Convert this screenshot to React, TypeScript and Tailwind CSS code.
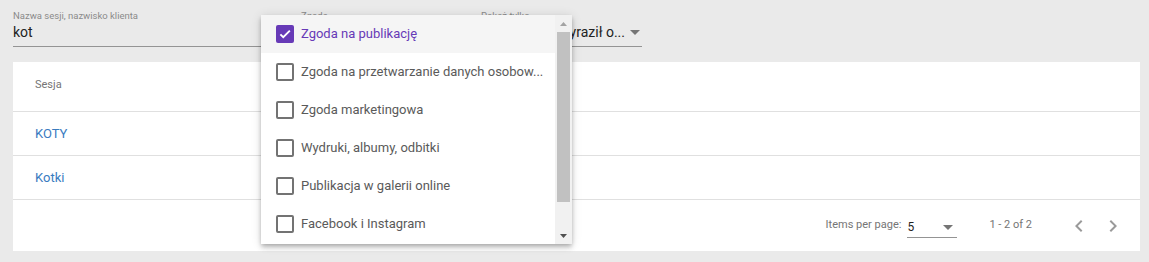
import React from 'react';

const options = [
  { label: 'Zgoda na publikację', checked: true },
  { label: 'Zgoda na przetwarzanie danych osobow...', checked: false },
  { label: 'Zgoda marketingowa', checked: false },
  { label: 'Wydruki, albumy, odbitki', checked: false },
  { label: 'Publikacja w galerii online', checked: false },
  { label: 'Facebook i Instagram', checked: false },
];

const sessions = ['KOTY', 'Kotki'];

const Caret = () => (
  <svg width="10" height="5" viewBox="0 0 10 5" className="shrink-0">
    <path d="M0 0 L5 5 L10 0 Z" fill="#757575" />
  </svg>
);

const Chevron = ({ dir }: { dir: 'left' | 'right' }) => (
  <svg width="24" height="24" viewBox="0 0 24 24">
    <path
      d={dir === 'left' ? 'M15.41 7.41L14 6l-6 6 6 6 1.41-1.41L10.83 12z' : 'M8.59 16.59L10 18l6-6-6-6-1.41 1.41L13.17 12z'}
      fill="#9a9a9a"
    />
  </svg>
);

const Checkbox = ({ checked }: { checked: boolean }) =>
  checked ? (
    <div className="w-[18px] h-[18px] rounded-[2px] bg-[#673ab7] flex items-center justify-center shrink-0">
      <svg width="14" height="14" viewBox="0 0 24 24">
        <path d="M4.1 12.7 9 17.6 20.3 6.3" fill="none" stroke="#fff" strokeWidth="3.2" />
      </svg>
    </div>
  ) : (
    <div className="w-[18px] h-[18px] rounded-[2px] border-2 border-[#737373] shrink-0" />
  );

export default function App() {
  return (
    <div className="relative w-[1149px] h-[262px] overflow-hidden bg-[#eaeaea] font-['Roboto',sans-serif]">
      {/* Filters */}
      <div className="flex px-[13px] pt-[10px]">
        <div className="w-[260px] flex flex-col border-b border-[#949494] pb-[4px]">
          <span className="text-[9.5px] leading-[12px] text-[#8a8a8a]">Nazwa sesji, nazwisko klienta</span>
          <span className="text-[14px] leading-[20px] text-[#222]">kot</span>
        </div>
        <div className="w-[160px] ml-[28px] flex flex-col border-b border-[#949494] pb-[4px]">
          <span className="text-[9.5px] leading-[12px] text-[#8a8a8a]">Zgoda</span>
          <div className="flex items-center justify-end h-[20px] pr-[2px]">
            <Caret />
          </div>
        </div>
        <div className="w-[161px] ml-[20px] flex flex-col border-b border-[#949494] pb-[4px]">
          <span className="text-[9.5px] leading-[12px] text-[#8a8a8a]">Pokaż tylko</span>
          <div className="flex items-center h-[20px] pr-[2px]">
            <span className="flex-1 text-[14px] text-[#222] whitespace-nowrap text-right pr-[5px]">Klient wyraził o...</span>
            <Caret />
          </div>
        </div>
      </div>

      {/* Table card */}
      <div className="mx-[13px] mt-[15px] w-[1127px] bg-white">
        <div className="h-[50px] flex items-center pl-[22px] border-b border-[#e0e0e0]">
          <span className="text-[11px] text-[#757575] -mt-[2px]">Sesja</span>
        </div>
        {sessions.map((s) => (
          <div key={s} className="h-[43px] flex items-center pl-[22px] border-b border-[#e0e0e0] box-content">
            <span className="text-[13px] text-[#3a7bbf]">{s}</span>
          </div>
        ))}
        <div className="h-[51px] flex items-center justify-end pr-[10px]">
          <span className="text-[11px] text-[#757575]">Items per page:</span>
          <div className="ml-[6px] w-[50px] h-[20px] mt-[4px] flex items-center border-b border-[#949494] pr-[4px]">
            <span className="flex-1 text-[12px] text-[#222]">5</span>
            <Caret />
          </div>
          <span className="ml-[32px] text-[11px] text-[#757575]">1 - 2 of 2</span>
          <div className="ml-[30px] w-[34px] flex justify-center">
            <Chevron dir="left" />
          </div>
          <div className="w-[34px] flex justify-center">
            <Chevron dir="right" />
          </div>
        </div>
      </div>

      {/* Dropdown panel */}
      <div className="absolute left-[261px] top-[15px] w-[311px] h-[229px] bg-white flex shadow-[0_2px_4px_-1px_rgba(0,0,0,0.2),0_4px_5px_0_rgba(0,0,0,0.14),0_1px_10px_0_rgba(0,0,0,0.12)]">
        <div className="flex-1 flex flex-col">
          {options.map((o) => (
            <div
              key={o.label}
              className={`h-[38px] flex items-center pl-[15px] gap-[7px] ${o.checked ? 'bg-[#f5f5f5]' : ''}`}
            >
              <Checkbox checked={o.checked} />
              <span
                className={`text-[13px] whitespace-nowrap ${o.checked ? 'text-[#673ab7]' : 'text-[#5a5a5a]'}`}
              >
                {o.label}
              </span>
            </div>
          ))}
        </div>
        <div className="w-[17px] bg-[#f1f1f1] flex flex-col items-center">
          <div className="h-[17px] flex items-center justify-center">
            <svg width="7" height="4" viewBox="0 0 7 4">
              <path d="M0 4 L3.5 0 L7 4 Z" fill="#a3a3a3" />
            </svg>
          </div>
          <div className="w-[13px] h-[170px] bg-[#c1c1c1]" />
          <div className="flex-1" />
          <div className="h-[17px] flex items-center justify-center">
            <svg width="7" height="4" viewBox="0 0 7 4">
              <path d="M0 0 L3.5 4 L7 0 Z" fill="#505050" />
            </svg>
          </div>
        </div>
      </div>
    </div>
  );
}
